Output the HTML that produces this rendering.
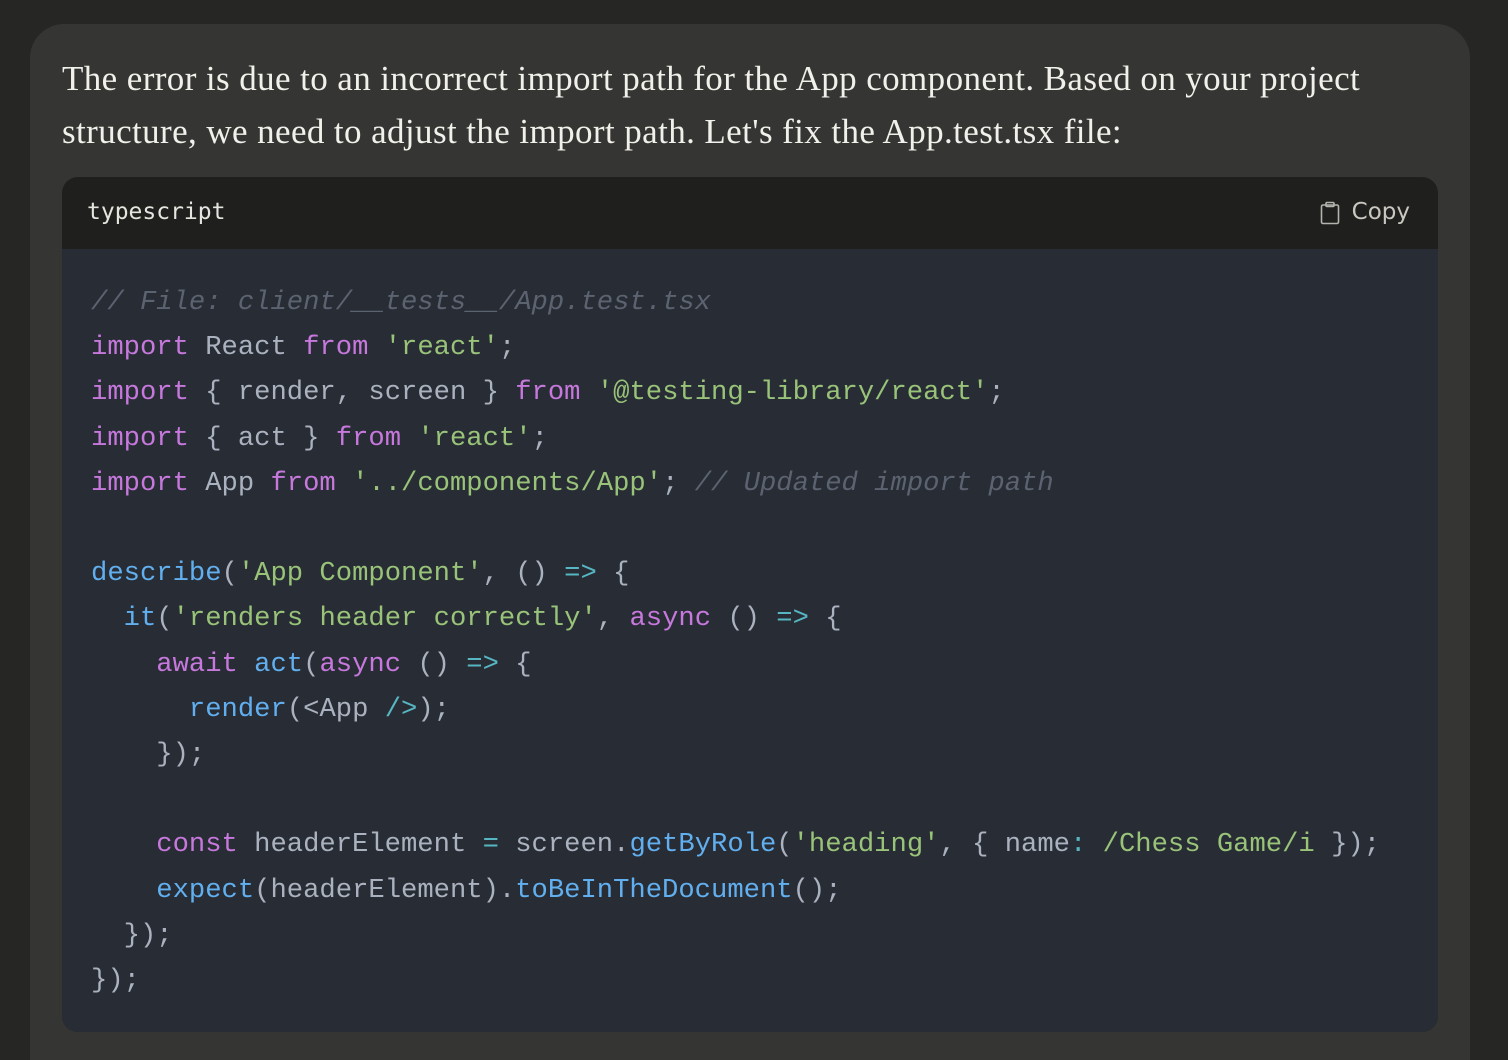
<!DOCTYPE html>
<html><head><meta charset="utf-8"><style>
html,body{margin:0;background:#262624;width:1508px;height:1060px;overflow:hidden;}
.card{position:absolute;left:30px;top:24px;width:1440px;height:1036px;background:#353533;border-radius:34px 34px 0 0;}
.p{position:absolute;left:62px;top:52px;width:1340px;font-family:"Liberation Serif",serif;font-size:35px;line-height:53px;color:#f2f0ea;letter-spacing:0.4px;}
.cb{position:absolute;left:62px;top:177px;width:1376px;height:855px;border-radius:16px;overflow:hidden;background:#1f1f1d;}
.hd{height:72px;position:relative;font-family:"DejaVu Sans Mono","Liberation Mono",monospace;color:#e6e4de;font-size:23px;}
.hd .l{position:absolute;left:25px;top:22px;}
.hd .r{position:absolute;right:28px;top:22px;color:#c9c7c0;font-family:"DejaVu Sans","Liberation Sans",sans-serif;font-size:23px;}
.hd svg{position:absolute;right:98px;top:24px;}
.bd{background:#282c34;height:783px;padding:31px 0 0 29px;box-sizing:border-box;}
pre{margin:0;font-family:"Liberation Mono",monospace;font-size:27.2px;line-height:45.2px;color:#abb2bf;}
.k{color:#c678dd}.s{color:#98c379}.f{color:#61afef}.c{color:#5c6370;font-style:italic}.o{color:#56b6c2}
</style></head><body>
<div class="card"></div>
<div class="p">The error is due to an incorrect import path for the App component. Based on your project structure, we need to adjust the import path. Let's fix the App.test.tsx file:</div>
<div class="cb">
<div class="hd"><span class="l">typescript</span>
<svg width="20" height="24" viewBox="0 0 20 24" fill="none" stroke="#b5b3ad" stroke-width="1.6"><rect x="1.5" y="4" width="17" height="18.5" rx="1.5"/><rect x="6" y="1.5" width="8" height="4" rx="1"/></svg>
<span class="r">Copy</span></div>
<div class="bd"><pre><span class="c">// File: client/__tests__/App.test.tsx</span>
<span class="k">import</span> React <span class="k">from</span> <span class="s">'react'</span>;
<span class="k">import</span> { render, screen } <span class="k">from</span> <span class="s">'@testing-library/react'</span>;
<span class="k">import</span> { act } <span class="k">from</span> <span class="s">'react'</span>;
<span class="k">import</span> App <span class="k">from</span> <span class="s">'../components/App'</span>; <span class="c">// Updated import path</span>

<span class="f">describe</span>(<span class="s">'App Component'</span>, () <span class="o">=&gt;</span> {
  <span class="f">it</span>(<span class="s">'renders header correctly'</span>, <span class="k">async</span> () <span class="o">=&gt;</span> {
    <span class="k">await</span> <span class="f">act</span>(<span class="k">async</span> () <span class="o">=&gt;</span> {
      <span class="f">render</span>(&lt;App <span class="o">/&gt;</span>);
    });

    <span class="k">const</span> headerElement <span class="o">=</span> screen.<span class="f">getByRole</span>(<span class="s">'heading'</span>, { name<span class="o">:</span> <span class="s">/Chess Game/i</span> });
    <span class="f">expect</span>(headerElement).<span class="f">toBeInTheDocument</span>();
  });
});</pre></div>
</div>
</body></html>
